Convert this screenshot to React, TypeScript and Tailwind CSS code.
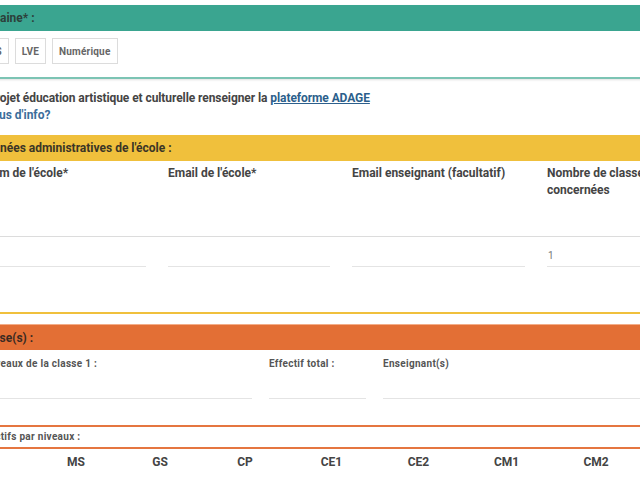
import React from "react";

const levels: { name: string; w: string }[] = [
  { name: "PS", w: "w-[84px]" },
  { name: "MS", w: "w-[84px]" },
  { name: "GS", w: "w-[84px]" },
  { name: "CP", w: "w-[86px]" },
  { name: "CE1", w: "w-[87px]" },
  { name: "CE2", w: "w-[87px]" },
  { name: "CM1", w: "w-[89px]" },
  { name: "CM2", w: "w-[90px]" },
];

const Chip = ({ label }: { label: string }) => (
  <button className="h-[26px] border border-[#dcdcdc] bg-white px-[6px] text-[10px] font-bold tracking-[0.2px] text-[#666]">
    {label}
  </button>
);

const Field = ({ value }: { value?: string }) => (
  <div className="h-[22px] border-b border-[#e4e4e4] pl-[1px] text-[10px] leading-[22px] text-[#777]">
    {value}
  </div>
);

export default function App() {
  return (
    <div className="h-[480px] w-[640px] overflow-hidden bg-white font-['Roboto',sans-serif]">
      <div className="ml-[-60px] w-[760px] pt-[5px]">
        {/* Domaine */}
        <section className="border-b-2 border-[#7cc4b4] shadow-[0_1px_2px_rgba(0,0,0,0.12)]">
          <div className="flex h-[26px] items-center bg-[#3aa590] pl-[35px] text-[12px] font-bold text-[#2c3f3a]">
            Domaine* :
          </div>
          <div className="flex h-[46px] items-start gap-[6px] pl-[36px] pt-[7px]">
            <Chip label="EPS" />
            <Chip label="LVE" />
            <Chip label="Numérique" />
          </div>
        </section>

        {/* Info */}
        <div className="pl-[48px] pt-[11px] text-[12px] font-bold leading-[17px] text-[#444]">
          <p className="tracking-[-0.08px]">
            Projet éducation artistique et culturelle renseigner la{" "}
            <a className="text-[#2c5f8c] underline">plateforme ADAGE</a>
          </p>
          <p className="text-[#3b6d9b]">Plus d'info?</p>
        </div>

        {/* Coordonnées */}
        <section className="mt-[11px] border-b-2 border-[#f0c03c] pb-[45px]">
          <div className="flex h-[26px] items-center bg-[#f0c03c] pl-[14px] text-[12px] font-bold text-[#3b3526]">
            Coordonnées administratives de l'école :
          </div>
          <div className="flex h-[76px] border-b border-[#dcdcdc] pl-[33px] pt-[4px] text-[12px] font-bold leading-[17px] text-[#444]">
            <div className="w-[184px] px-[11px]">Nom de l'école*</div>
            <div className="w-[184px] px-[11px]">Email de l'école*</div>
            <div className="w-[195px] px-[11px]">Email enseignant (facultatif)</div>
            <div className="w-[152px] px-[11px]">Nombre de classes concernées</div>
          </div>
          <div className="flex pl-[33px] pt-[8px]">
            <div className="w-[184px] px-[11px]">
              <Field />
            </div>
            <div className="w-[184px] px-[11px]">
              <Field />
            </div>
            <div className="w-[195px] px-[11px]">
              <Field />
            </div>
            <div className="w-[152px] px-[11px]">
              <Field value="1" />
            </div>
          </div>
        </section>

        {/* Classes */}
        <section className="mt-[10px]">
          <div className="flex h-[26px] items-center border-t border-[#f3ad88] bg-[#e36f35] pl-[36px] text-[12px] font-bold text-[#3a2a22]">
            Classe(s) :
          </div>
          <div className="flex gap-[17px] pl-[45px] pt-[7px] text-[10px] font-bold leading-[14px] tracking-[0.3px] text-[#555]">
            <div className="w-[267px]">
              <p>Niveaux de la classe 1 :</p>
              <div className="h-[28px] border-b border-[#e4e4e4]" />
            </div>
            <div className="w-[97px]">
              <p>Effectif total :</p>
              <div className="h-[28px] border-b border-[#e4e4e4]" />
            </div>
            <div className="flex-1">
              <p>Enseignant(s)</p>
              <div className="h-[28px] border-b border-[#e4e4e4]" />
            </div>
          </div>
          <div className="mt-[26px] border-y-2 border-[#e57640] pl-[36px] text-[10px] font-bold leading-[20px] tracking-[0.3px] text-[#555]">
            Effectifs par niveaux :
          </div>
          <div className="flex pl-[10px] pt-[6px] text-[12px] font-bold leading-[14px] text-[#444]">
            {levels.map((l) => (
              <div key={l.name} className={`${l.w} text-center`}>
                {l.name}
              </div>
            ))}
          </div>
        </section>
      </div>
    </div>
  );
}
